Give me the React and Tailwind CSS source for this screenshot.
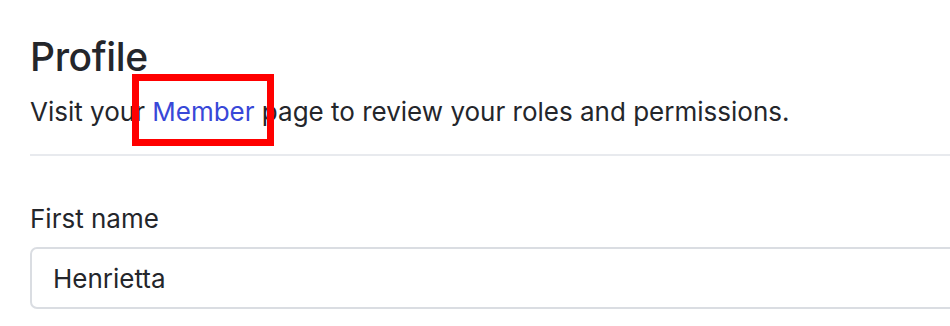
export default function App() {
  return (
    <div className="relative w-[950px] h-[326px] overflow-hidden bg-white font-['Inter',sans-serif] text-[#24262b]">
      <div className="pl-[30px] pt-[34px]">
        <h1 className="text-[39px] leading-[46px] font-medium tracking-[-0.01em]">Profile</h1>
        <p className="mt-[14px] text-[26px] leading-[36px]">
          Visit your <span className="text-[#3848d8]">Member</span> page to review your roles and permissions.
        </p>
        <div className="mt-[24px] h-[2px] bg-[#e8eaee]" />
        <label className="mt-[45px] block text-[26px] leading-[36px]">First name</label>
        <div className="mt-[10px] w-[940px] h-[62px] rounded-[7px] border-2 border-[#dadde2] flex items-center pl-[21px] text-[26px]">
          Henrietta
        </div>
      </div>
      <div className="absolute left-[132px] top-[74px] w-[142px] h-[72px] border-[7px] border-[#ff0000]" />
    </div>
  );
}
